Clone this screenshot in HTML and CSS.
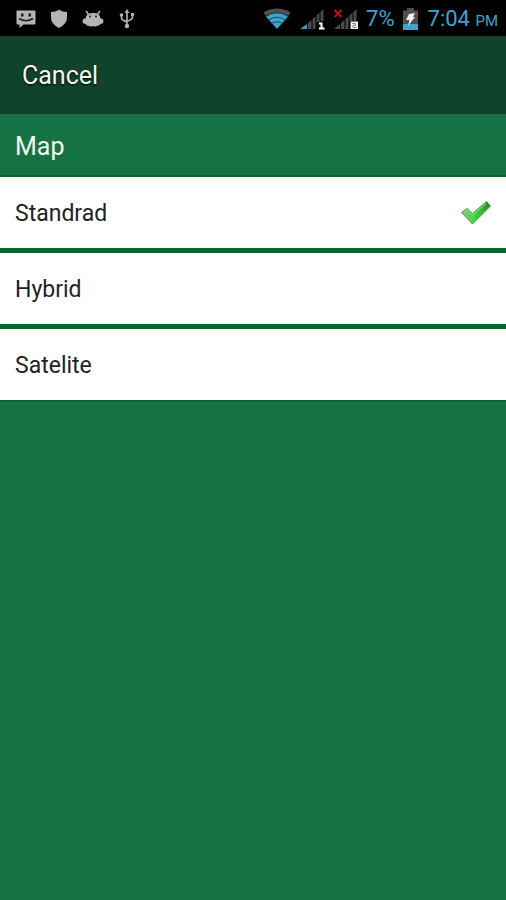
FILE: index.html
```html
<!DOCTYPE html>
<html lang="en">
<head>
<meta charset="utf-8">
<meta name="viewport" content="width=device-width, initial-scale=1">
<title>Map</title>
<link rel="stylesheet" href="styles.css">
</head>
<body>
<div class="status">
  <div class="status-group notices">
    <svg class="icon" width="20" height="20" viewBox="0 0 20 20" aria-hidden="true">
      <path fill="#b4b4b4" d="M1.500 1.500h17q1 0 1 1v12q0 1-1 1H7.500L3.500 19v-3.500h-2q-1 0-1-1v-12q0-1 1-1z"/>
      <path fill="#1c1c1c" d="M5 4.500h2.500v3H5zM12.500 4.500H15v3h-2.500z"/>
      <path fill="none" stroke="#1c1c1c" stroke-width="1.500" d="M3 9.500q7 4.500 14 0"/>
    </svg>
    <svg class="icon" width="20" height="20" viewBox="0 0 20 20" aria-hidden="true">
      <path fill="#b4b4b4" d="M10 .8Q13.500 3 18 3v5.500q0 6.500-8 10.500Q2 15 2 8.500V3q4.500 0 8-2.200z"/>
    </svg>
    <svg class="icon" width="22" height="20" viewBox="0 0 22 20" aria-hidden="true">
      <path fill="none" stroke="#b4b4b4" stroke-width="1.500" stroke-linecap="round" d="M4.500 2.500l2.500 4M17.500 2.500l-2.500 4"/>
      <path fill="#b4b4b4" d="M3.500 9.500Q4 4 11 4t7.500 5.500q3-.5 3 2.500t-3 3q-1 2-4 2-1 1-3.500 0-2.500 1-3.500 0-3 0-4-2-3 0-3-3t3-2.500z"/>
      <circle cx="8" cy="7.500" r="1" fill="#1c1c1c"/><circle cx="14" cy="7.500" r="1" fill="#1c1c1c"/>
    </svg>
    <svg class="icon" width="20" height="20" viewBox="0 0 20 20" aria-hidden="true">
      <path fill="none" stroke="#b4b4b4" stroke-width="1.600" d="M10 3v13M4.500 6v3q0 2 5.500 4M15.500 6v2q0 3-5.500 4"/>
      <path fill="#b4b4b4" d="M10 0l2.500 4h-5zM14 4h3v3h-3z"/>
      <circle cx="4.500" cy="6" r="1.800" fill="#b4b4b4"/><circle cx="10" cy="17" r="2.200" fill="#b4b4b4"/>
    </svg>
  </div>
  <div class="status-group">
    <svg class="icon" width="30" height="22" viewBox="0 0 30 22" aria-hidden="true">
      <path fill="#3fa3cd" d="M4 8.500q11-7 22 0L15 21z"/>
      <path fill="none" stroke="#505050" stroke-width="4" d="M2.500 6q12.500-7 25 0"/>
      <path fill="none" stroke="#10506c" stroke-width="1" d="M3.500 8.500q11.500-7.500 23 0M6.500 12q8.500-5.500 17 0M9.500 15.500q5.500-3.500 11 0"/>
    </svg>
    <svg class="icon sim" width="25" height="22" viewBox="0 0 25 22" aria-hidden="true">
      <path fill="#2f9ccb" d="M0 21l7-5v5z"/>
      <path fill="#4a4a4a" d="M8 15l3.500-3V21H8zM12.500 11l3-2.500V21h-3zM16.500 7.500l3-3V14h-3zM20.500 4L23.500 1v12h-3z"/>
      <path fill="none" stroke="#fff" stroke-width="2" d="M19 15.500h2.500V20M19 20.500h5.500"/>
    </svg>
    <svg class="icon sim" width="25" height="22" viewBox="0 0 25 22" aria-hidden="true">
      <path fill="#4a4a4a" d="M1 21l6-5v5zM8 15l3.500-3V21H8zM12.500 11l3-2.500V21h-3zM16.500 7.500l3-3V13h-3zM20.500 4L23.500 1v12h-3z"/>
      <path fill="none" stroke="#c80f16" stroke-width="2" d="M1.500 2l7 7M8.500 2l-7 7"/>
      <path fill="#eee" d="M17.500 13.500H25V21h-7.500z"/>
      <path fill="none" stroke="#888" d="M19 15.500h3.500v2H20v2h3.500"/>
    </svg>
    <span class="battery-level">7%</span>
    <svg class="icon battery" width="15" height="22" viewBox="0 0 15 22" aria-hidden="true">
      <path fill="#4d4d4d" d="M4 0h7v2.500h4V16H0V2.500h4z"/>
      <path fill="#3fa3cd" d="M0 16h15v6H0z"/>
      <path fill="#f0f0f0" d="M6 6l6-1-2 4h2L5 18l1.500-6H3z"/>
    </svg>
    <span class="clock">7:04 <small>PM</small></span>
  </div>
</div>
<header class="toolbar"><button class="cancel" type="button">Cancel</button></header>
<main>
  <h1 class="title" id="map-title">Map</h1>
  <div class="options" role="radiogroup" aria-labelledby="map-title">
    <label class="option"><input type="radio" name="map" checked><span>Standrad</span>
      <svg class="tick" width="32" height="26" viewBox="0 0 32 26" aria-hidden="true">
        <defs><linearGradient id="leaf" x1="0" y1="0" x2="1" y2="0">
          <stop offset="0" stop-color="#8cc58a"/><stop offset=".4" stop-color="#3fdc3f"/><stop offset=".7" stop-color="#35b832"/><stop offset="1" stop-color="#2b7a2b"/>
        </linearGradient></defs>
        <path fill="url(#leaf)" stroke="#4f9a51" stroke-linejoin="round" d="M1.500 12.500L7 8.500l5.500 5L26.500 1.500l4 4.500L12.500 24z"/>
        <path fill="none" stroke="#96e38e" d="M3.500 12.500L7 10l5.500 5L26 3.500"/>
      </svg>
    </label>
    <label class="option"><input type="radio" name="map"><span>Hybrid</span></label>
    <label class="option"><input type="radio" name="map"><span>Satelite</span></label>
  </div>
</main>
</body>
</html>
```
FILE: styles.css
```css
* {
  box-sizing: border-box;
}

body {
  margin: 0;
  min-height: 100vh;
  background: #147244;
  font-family: Roboto, "Liberation Sans", sans-serif;
}

.status {
  display: flex;
  justify-content: space-between;
  align-items: center;
  height: 36px;
  padding: 1px 8px 0 16px;
  background: #000;
  color: #38a5d5;
  font-size: 22px;
}

.status-group {
  display: flex;
  align-items: center;
}

.notices {
  gap: 13px;
}

.icon {
  display: block;
  flex: none;
}

.sim {
  margin-left: 8px;
}

.battery-level {
  margin: 0 8px;
}

.battery {
  margin-right: 10px;
}

.clock small {
  font-size: 15px;
}

.toolbar {
  display: flex;
  align-items: center;
  height: 78px;
  padding: 2px 22px 0;
  background: #0f432c;
}

.cancel {
  padding: 0;
  border: 0;
  background: none;
  color: #f4f6f0;
  font: 25px/32px Roboto, "Liberation Sans", sans-serif;
  text-shadow: 0 1px 2px #000;
}

.title {
  margin: 0;
  padding: 17px 15px 12px;
  color: #f4f8ee;
  font-size: 25px;
  font-weight: 400;
  line-height: 32px;
}

.options {
  display: grid;
  gap: 5px;
  padding: 2px 0;
  background: #07642c;
}

.option {
  display: flex;
  align-items: center;
  justify-content: space-between;
  min-height: 71px;
  padding: 1px 14px 0 15px;
  background: #fff;
  color: #222;
  font-size: 23px;
}

.option input {
  position: absolute;
  opacity: 0;
}

.option:has(input:focus-visible) {
  outline: 2px solid #147244;
  outline-offset: -4px;
}
```
